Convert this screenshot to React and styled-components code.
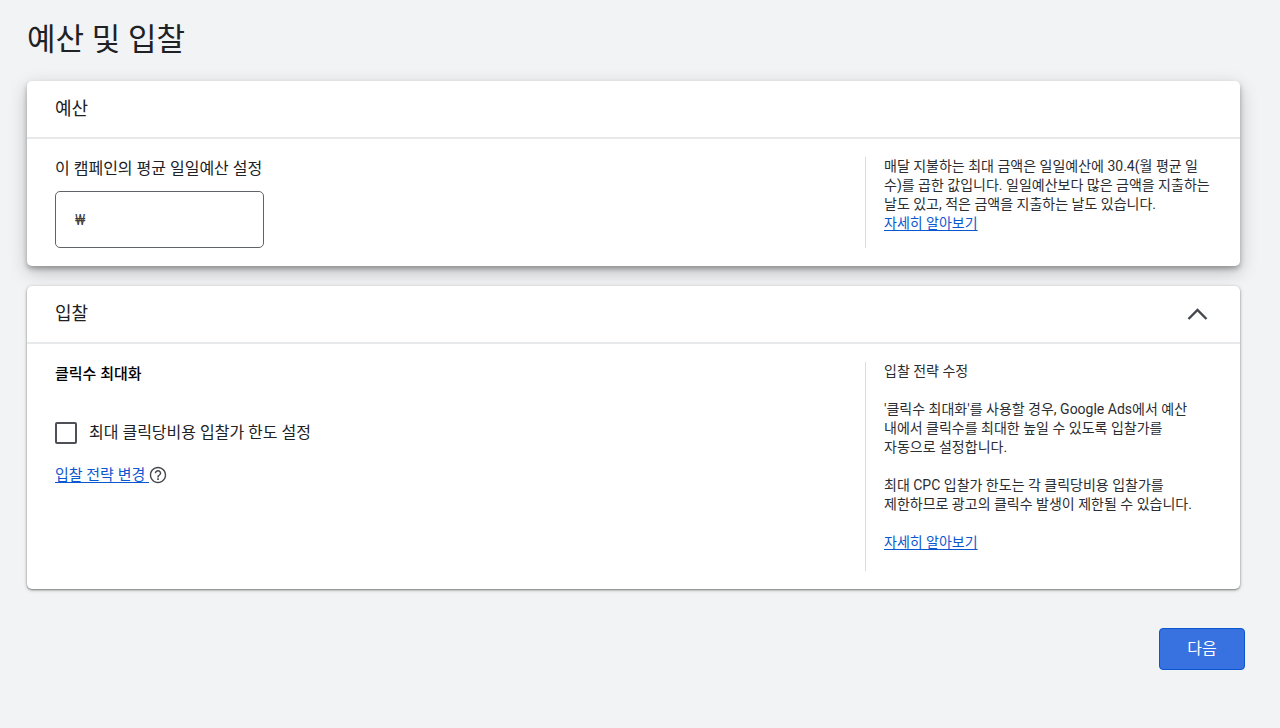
import React, { useState } from 'react';
import styled, { createGlobalStyle } from 'styled-components';

const GlobalStyle = createGlobalStyle`
  * {
    box-sizing: border-box;
  }
  body {
    margin: 0;
    background: #f1f3f4;
    color: #202124;
    font-family: Roboto, 'Noto Sans CJK KR', sans-serif;
    font-size: 14px;
    word-break: keep-all;
  }
`;

const Page = styled.main`
  padding: 16px 40px 32px 27px;
`;

const Title = styled.h1`
  margin: 0 0 17px;
  font-size: 31px;
  font-weight: 400;
  line-height: 48px;
`;

const Card = styled.section`
  margin-bottom: 20px;
  background: #fff;
  border-radius: 5px;
  box-shadow: ${(props) =>
    props.$raised
      ? '0 3px 5px rgba(0, 0, 0, 0.28), 0 6px 18px rgba(0, 0, 0, 0.22)'
      : '0 1px 2px rgba(0, 0, 0, 0.4), 0 1px 4px rgba(0, 0, 0, 0.2)'};
`;

const CardHeader = styled.header`
  display: flex;
  align-items: center;
  justify-content: space-between;
  height: 58px;
  padding: 0 28px;
  border-bottom: 2px solid #e8e9eb;
`;

const CardTitle = styled.h2`
  margin: 0;
  font-size: 18px;
  font-weight: 400;
  line-height: 24px;
`;

const CardBody = styled.div`
  display: flex;
  padding: 18px 28px;
`;

const Main = styled.div`
  flex: 1;
`;

const Help = styled.aside`
  flex: 0 0 347px;
  min-height: ${(props) => (props.$tall ? '209px' : '90px')};
  padding-left: 18px;
  border-left: 1px solid #dadce0;
  color: #2b2d31;
  line-height: 19px;
`;

const HelpText = styled.p`
  margin: 0 0 ${(props) => (props.$tight ? '0' : '19px')};
`;

const Link = styled.a`
  color: #0b57d0;
  text-decoration: underline;
  text-underline-offset: 2px;
`;

const FieldLabel = styled.label`
  display: block;
  margin-bottom: 10px;
  font-size: 16px;
  line-height: 24px;
`;

const MoneyField = styled.div`
  display: flex;
  align-items: center;
  width: 209px;
  height: 57px;
  padding: 0 19px;
  border: 1px solid #5f6368;
  border-radius: 5px;
  color: #3c4043;
`;

const MoneyInput = styled.input`
  flex: 1;
  min-width: 0;
  padding: 0 8px;
  border: 0;
  outline: 0;
  background: transparent;
  font: inherit;
`;

const Strategy = styled.h3`
  margin: 0 0 35px;
  color: #000;
  font-size: 15px;
  font-weight: 500;
  line-height: 24px;
`;

const CheckLabel = styled.label`
  display: flex;
  align-items: center;
  gap: 12px;
  margin-bottom: 18px;
  font-size: 16px;
  line-height: 24px;
`;

const Checkbox = styled.input`
  appearance: none;
  width: 22px;
  height: 22px;
  margin: 0;
  border: 2px solid #4d5055;
  border-radius: 2px;
  &:checked {
    background: #3871e0;
  }
`;

const ChangeRow = styled.div`
  display: flex;
  align-items: center;
  font-size: 15px;
  line-height: 24px;
  white-space: pre;
`;

const IconButton = styled.button`
  display: flex;
  padding: 0;
  border: 0;
  background: none;
  color: #45484d;
  cursor: pointer;
`;

const Footer = styled.footer`
  display: flex;
  justify-content: flex-end;
  margin: 39px -5px 0 0;
`;

const NextButton = styled.button`
  width: 86px;
  height: 42px;
  padding: 0 0 4px;
  border: 1px solid #0b57d0;
  border-radius: 4px;
  background: #3871e0;
  color: #fff;
  font: inherit;
  font-size: 16px;
  cursor: pointer;
`;

function ChevronUp() {
  return (
    <svg width="28" height="28" viewBox="0 0 28 28" fill="none">
      <path d="M4.5 19L13.5 10L22.5 19" stroke="currentColor" strokeWidth="2.4" />
    </svg>
  );
}

function HelpIcon() {
  return (
    <svg width="18" height="18" viewBox="1 1 22 22" fill="currentColor">
      <path d="M11 16h2v2h-2v-2zm1-14C6.48 2 2 6.48 2 12s4.48 10 10 10 10-4.48 10-10S17.52 2 12 2zm0 18.3c-4.58 0-8.3-3.72-8.3-8.3S7.42 3.7 12 3.7s8.3 3.72 8.3 8.3-3.72 8.3-8.3 8.3zm0-14.3c-2.21 0-4 1.79-4 4h1.8c0-1.2 1-2.2 2.2-2.2s2.2 1 2.2 2.2c0 2-3.1 1.85-3.1 5h1.8c0-2.25 3.1-2.5 3.1-5 0-2.21-1.79-4-4-4z" />
    </svg>
  );
}

export default function App() {
  const [open, setOpen] = useState(true);

  return (
    <Page>
      <GlobalStyle />
      <Title>예산 및 입찰</Title>

      <Card $raised>
        <CardHeader>
          <CardTitle>예산</CardTitle>
        </CardHeader>
        <CardBody>
          <Main>
            <FieldLabel htmlFor="budget">이 캠페인의 평균 일일예산 설정</FieldLabel>
            <MoneyField>
              <span>₩</span>
              <MoneyInput id="budget" type="text" inputMode="numeric" />
            </MoneyField>
          </Main>
          <Help>
            <HelpText $tight>
              매달 지불하는 최대 금액은 일일예산에 30.4(월 평균 일 수)를 곱한
              값입니다. 일일예산보다 많은 금액을 지출하는 날도 있고, 적은 금액을
              지출하는 날도 있습니다.
            </HelpText>
            <Link href="#budget-help">자세히 알아보기</Link>
          </Help>
        </CardBody>
      </Card>

      <Card>
        <CardHeader>
          <CardTitle id="bidding">입찰</CardTitle>
          <IconButton
            type="button"
            aria-labelledby="bidding"
            aria-expanded={open}
            onClick={() => setOpen(!open)}
          >
            <ChevronUp />
          </IconButton>
        </CardHeader>
        {open && (
          <CardBody>
            <Main>
              <Strategy>클릭수 최대화</Strategy>
              <CheckLabel>
                <Checkbox type="checkbox" />
                최대 클릭당비용 입찰가 한도 설정
              </CheckLabel>
              <ChangeRow>
                <Link id="change" href="#strategy">입찰 전략 변경 </Link>
                <IconButton type="button" aria-labelledby="change">
                  <HelpIcon />
                </IconButton>
              </ChangeRow>
            </Main>
            <Help $tall>
              <HelpText>입찰 전략 수정</HelpText>
              <HelpText>
                '클릭수 최대화'를 사용할 경우, Google Ads에서 예산 내에서
                클릭수를 최대한 높일 수 있도록 입찰가를 자동으로 설정합니다.
              </HelpText>
              <HelpText>
                최대 CPC 입찰가 한도는 각 클릭당비용 입찰가를 제한하므로 광고의
                클릭수 발생이 제한될 수 있습니다.
              </HelpText>
              <Link href="#bidding-help">자세히 알아보기</Link>
            </Help>
          </CardBody>
        )}
      </Card>

      <Footer>
        <NextButton type="button">다음</NextButton>
      </Footer>
    </Page>
  );
}
